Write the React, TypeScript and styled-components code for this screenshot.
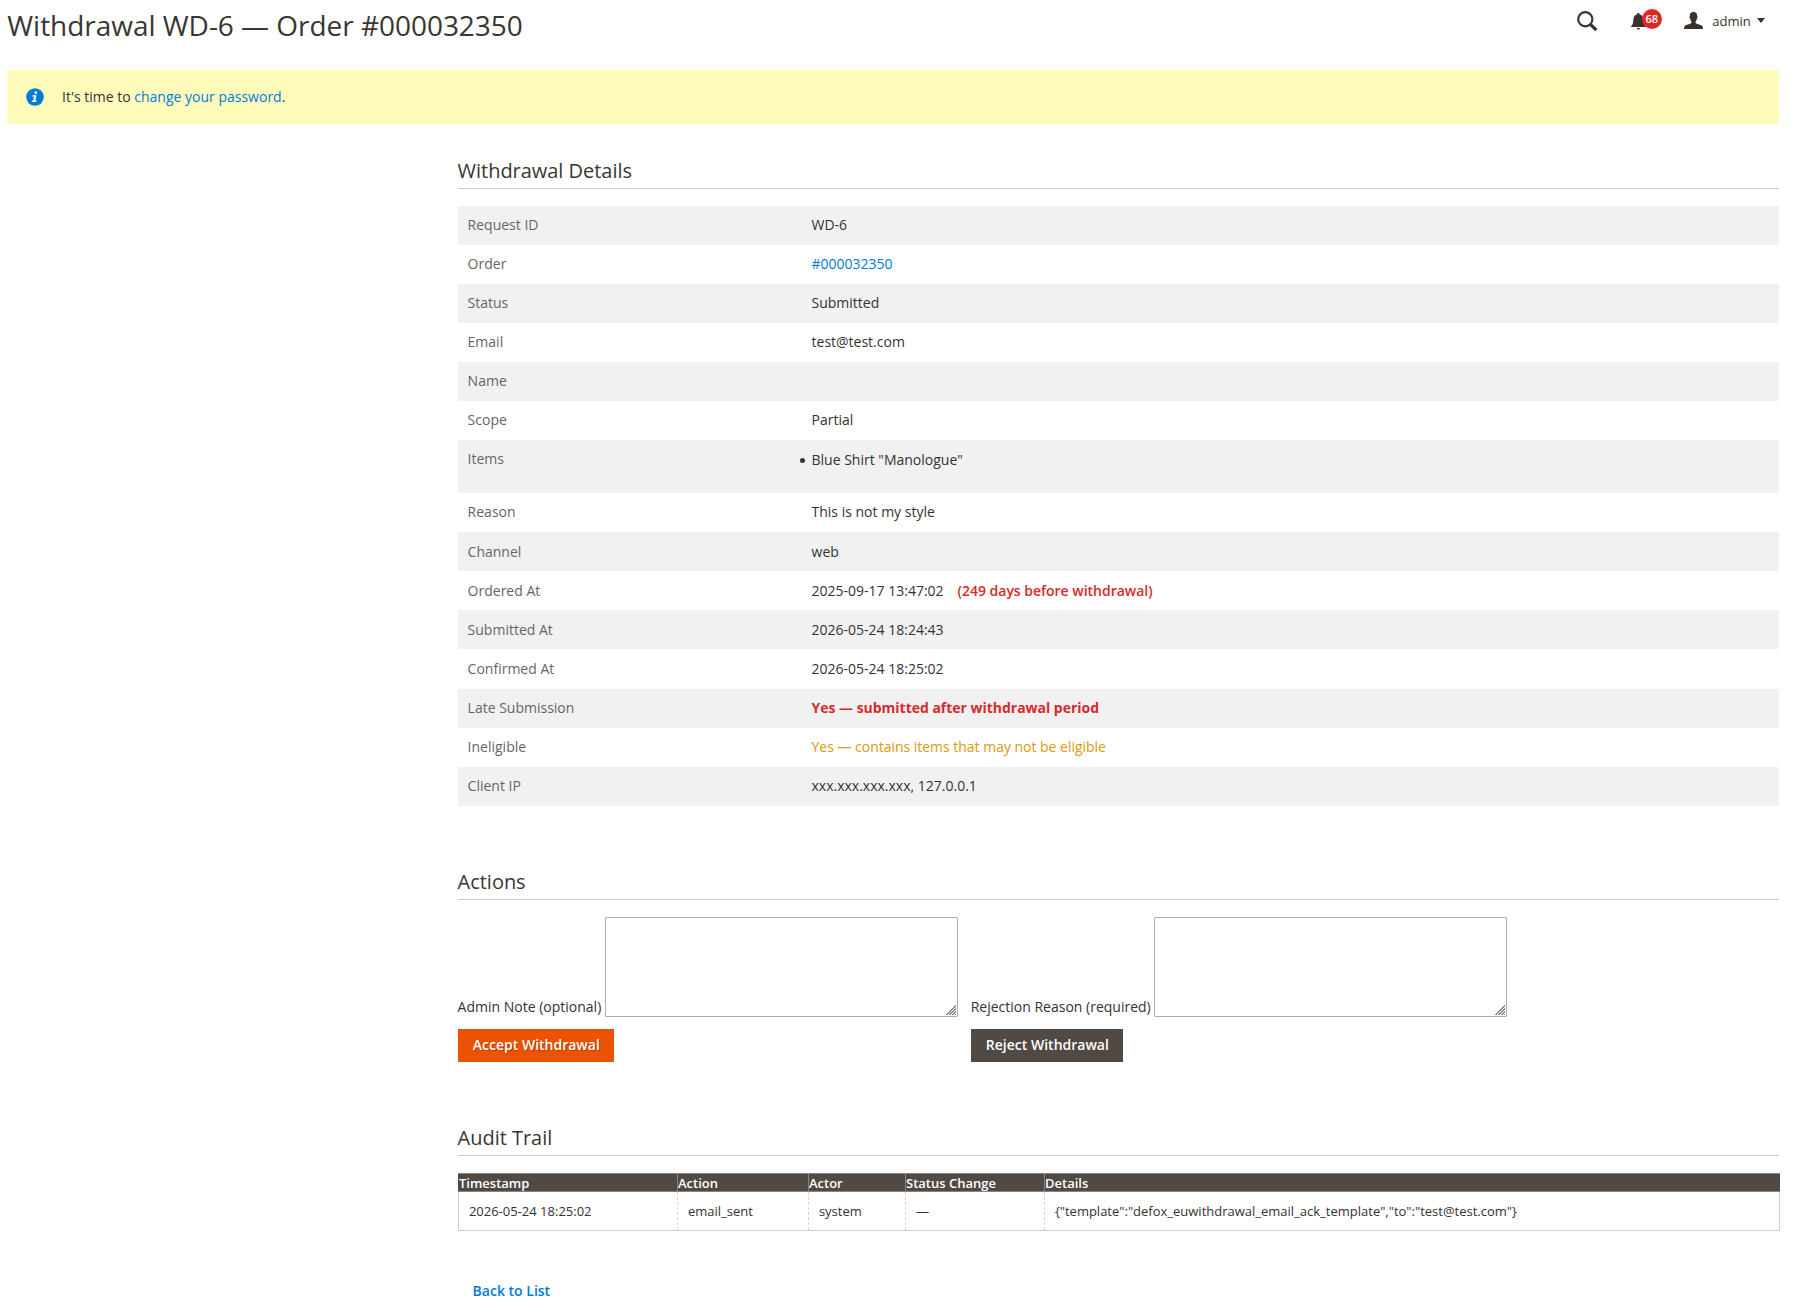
import React from 'react';
import styled, { createGlobalStyle, css } from 'styled-components';

const GlobalStyle = createGlobalStyle`
  *, *::before, *::after { box-sizing: border-box; }
  body {
    margin: 0;
    background: #fff;
    color: #333;
    font-family: "Open Sans", "Noto Sans", sans-serif;
    font-size: 14px;
    line-height: 1.36;
  }
`;

const Page = styled.div`
  width: 1779.3px;
  min-height: 1314px;
  padding-left: 7.3px;
`;

const Header = styled.header`
  display: flex;
  justify-content: space-between;
  align-items: flex-start;
  height: 70px;
`;

const Title = styled.h1`
  margin: 6px 0 0;
  font-size: 28px;
  font-weight: 400;
  line-height: 38px;
  letter-spacing: -0.03px;
  color: #3a3632;
`;

const HeaderTools = styled.div`
  display: flex;
  align-items: center;
  height: 42px;
  padding-right: 14px;
  color: #3a322c;

  svg { display: block; }
`;

const SearchButton = styled.span`
  margin-right: 33px;
`;

const Notifications = styled.span`
  position: relative;
  width: 31px;
  margin: 1px 22px 0 0;
`;

const Badge = styled.span`
  position: absolute;
  top: -4px;
  left: 10.5px;
  width: 20px;
  height: 20px;
  border-radius: 50%;
  background: #e22626;
  color: #fff;
  font-size: 11px;
  font-weight: 600;
  line-height: 20px;
  text-align: center;
`;

const Account = styled.span`
  display: flex;
  align-items: center;
  font-size: 13px;
`;

const AccountName = styled.span`
  margin: 2px 6.5px 0 9px;
`;

const Notice = styled.div`
  display: flex;
  align-items: center;
  height: 54.4px;
  padding-left: 19px;
  background: #fffbbb;
`;

const NoticeText = styled.span`
  margin: -2px 0 0 17.7px;
`;

const Link = styled.a`
  color: #007bdb;
  text-decoration: none;
`;

const Content = styled.main`
  margin-left: 450.3px;
  padding-top: 32.6px;
`;

const Section = styled.section<{ $gap: number }>`
  margin-bottom: ${(p) => p.$gap}px;
`;

const SectionTitle = styled.h2`
  margin: 0 0 17px;
  height: 32px;
  border-bottom: 1px solid #ccc;
  font-size: 20px;
  font-weight: 400;
  line-height: 27px;
  letter-spacing: -0.03px;
  color: #3a3632;
`;

const Details = styled.dl`
  margin: 0;
`;

const DetailRow = styled.div<{ $tall?: boolean }>`
  display: grid;
  grid-template-columns: 26% 1fr;
  min-height: ${(p) => (p.$tall ? 53.2 : 39.04)}px;

  &:nth-child(odd) { background: #f1f1f1; }
`;

const Term = styled.dt`
  padding: 9.12px 10px 9px;
  color: #666;
`;

const Value = styled.dd`
  margin: 0;
  padding: 9.12px 10px 9px 10.3px;
`;

const ItemList = styled.ul`
  margin: 1px 0 0;
  padding: 0;
  list-style: none;
`;

const Item = styled.li`
  display: flex;
  align-items: center;
  gap: 7px;
  margin-left: -12px;

  &::before {
    content: "";
    width: 5px;
    height: 5px;
    margin-top: 2px;
    border-radius: 50%;
    background: #333;
  }
`;

const tones = { late: '#d8292b', warn: '#e0980f' };

const Flag = styled.span<{ $tone: keyof typeof tones; $weight?: number; $spaced?: boolean }>`
  color: ${(p) => tones[p.$tone]};
  font-weight: ${(p) => p.$weight ?? 400};
  letter-spacing: -0.02px;
  ${(p) => p.$spaced && css`margin-left: 14px;`}
`;

const Forms = styled.div`
  display: flex;
  gap: 13px;
`;

const Field = styled.label`
  display: flex;
  align-items: flex-end;
  gap: 3.4px;
  height: 100px;
  margin-bottom: 12px;
`;

const FieldLabel = styled.span`
  margin-bottom: 1px;
`;

const TextArea = styled.textarea`
  width: 353px;
  height: 100px;
  margin: 0;
  border: 1px solid #adadad;
  border-radius: 1px;
  background:
    linear-gradient(135deg, #fff 50%, transparent 50%) right 1px bottom 1px / 11px 11px no-repeat,
    repeating-linear-gradient(135deg, #888 0 0.7px, #fff 1.1px 1.9px, #888 2.12px) right 1px bottom 1px / 11px 11px no-repeat,
    #fff;
  resize: none;
`;

const Button = styled.button<{ $primary?: boolean }>`
  display: block;
  height: 33px;
  padding: 0 14.6px 1px 15.2px;
  border: 0;
  background: ${(p) => (p.$primary ? '#eb5202' : '#514943')};
  color: #fff;
  font: 600 14px/32px "Open Sans", sans-serif;
  ${(p) => p.$primary && css`text-shadow: 1px 1px 0 rgba(0, 0, 0, 0.25);`}
`;

const Audit = styled.div`
  font-size: 13px;
  border: 1px solid #ccc;
  margin-right: -1px;
`;

const AuditRow = styled.div<{ $head?: boolean }>`
  display: grid;
  grid-template-columns: 219px 131px 97px 139px 1fr;
  ${(p) =>
    p.$head
      ? css`
          height: 19px;
          margin: -1px -1px 0;
          padding: 0 1px;
          border-top: 1px solid #8a837f;
          border-bottom: 1px solid #8a837f;
          background: #514943;
          color: #fff;
          font-weight: 600;
          line-height: 18px;
        `
      : css`
          height: 38px;
          line-height: 38px;
        `}
`;

const AuditCell = styled.span<{ $head?: boolean }>`
  padding-left: ${(p) => (p.$head ? 0.4 : 10.3)}px;
  &:not(:last-child) {
    border-right: 1px ${(p) => (p.$head ? 'solid #8a837f' : 'dashed #d6d6d6')};
  }
`;

const BackLink = styled(Link)`
  display: inline-block;
  margin-left: 15px;
  font-weight: 600;
`;

const details: { label: string; value: React.ReactNode; tall?: boolean }[] = [
  { label: 'Request ID', value: 'WD-6' },
  { label: 'Order', value: <Link>#000032350</Link> },
  { label: 'Status', value: 'Submitted' },
  { label: 'Email', value: 'test@test.com' },
  { label: 'Name', value: '' },
  { label: 'Scope', value: 'Partial' },
  { label: 'Items', value: <ItemList><Item>Blue Shirt "Manologue"</Item></ItemList>, tall: true },
  { label: 'Reason', value: 'This is not my style' },
  { label: 'Channel', value: 'web' },
  {
    label: 'Ordered At',
    value: (
      <>
        2025-09-17 13:47:02
        <Flag $tone="late" $weight={600} $spaced>(249 days before withdrawal)</Flag>
      </>
    ),
  },
  { label: 'Submitted At', value: '2026-05-24 18:24:43' },
  { label: 'Confirmed At', value: '2026-05-24 18:25:02' },
  { label: 'Late Submission', value: <Flag $tone="late" $weight={700}>Yes — submitted after withdrawal period</Flag> },
  { label: 'Ineligible', value: <Flag $tone="warn">Yes — contains items that may not be eligible</Flag> },
  { label: 'Client IP', value: 'xxx.xxx.xxx.xxx, 127.0.0.1' },
];

const auditHead = ['Timestamp', 'Action', 'Actor', 'Status Change', 'Details'];
const auditRow = [
  '2026-05-24 18:25:02',
  'email_sent',
  'system',
  '—',
  '{"template":"defox_euwithdrawal_email_ack_template","to":"test@test.com"}',
];

const SearchIcon = () => (
  <svg width="21" height="21" viewBox="0 0 21 21" fill="none" stroke="currentColor">
    <circle cx="8.3" cy="8.3" r="7.1" strokeWidth="2.2" />
    <path d="M13.4 13.4 19.4 19.2" strokeWidth="3.2" />
  </svg>
);

const BellIcon = () => (
  <svg width="15" height="17" viewBox="0 0 15 17" fill="currentColor">
    <path d="M6.2 0h2.2v1.2C11 1.7 12.2 3.8 12.3 6.5c.1 3.5.8 5.3 2.5 7V14H0v-.5c1.7-1.7 2.3-3.5 2.4-7C2.5 3.8 3.7 1.7 6.2 1.2zM5.8 15h3.2c-.2 1-.8 1.5-1.6 1.5S6 16 5.8 15z" />
  </svg>
);

const UserIcon = () => (
  <svg width="19" height="17" viewBox="0 0 19 17" fill="currentColor">
    <path d="M9.5 0c2.6 0 3.8 1.6 3.7 4.2.6.2.3 1.7-.3 2.2-.2 1.5-.8 2.5-1.3 3v1.5c.6 1 6 1.7 6.8 3.2.4.7.5 1.7.5 2.9H.1c0-1.2.1-2.2.5-2.9.8-1.5 6.2-2.2 6.8-3.2V9.4c-.5-.5-1.1-1.5-1.3-3-.6-.5-.9-2-.3-2.2C5.7 1.6 6.9 0 9.5 0z" />
  </svg>
);

const CaretIcon = () => (
  <svg width="8" height="5" viewBox="0 0 8 5" fill="currentColor">
    <path d="M0 0h8L4 5z" />
  </svg>
);

const InfoIcon = () => (
  <svg width="18" height="18" viewBox="0 0 18 18">
    <circle cx="9" cy="9" r="8.8" fill="#007bdb" />
    <circle cx="9.8" cy="4.7" r="1.4" fill="#fff" />
    <path d="M6.5 7.3h4.1l-1.3 5.3h1.3l-.3 1.3H5.9l.3-1.3h1l.9-4H6.2z" fill="#fff" />
  </svg>
);

export default function App() {
  return (
    <>
      <GlobalStyle />
      <Page>
        <Header>
          <Title>Withdrawal WD-6 — Order #000032350</Title>
          <HeaderTools>
            <SearchButton><SearchIcon /></SearchButton>
            <Notifications>
              <BellIcon />
              <Badge>68</Badge>
            </Notifications>
            <Account>
              <UserIcon />
              <AccountName>admin</AccountName>
              <CaretIcon />
            </Account>
          </HeaderTools>
        </Header>
        <Notice>
          <InfoIcon />
          <NoticeText>It's time to <Link>change your password</Link>.</NoticeText>
        </Notice>
        <Content>
          <Section $gap={62.3}>
            <SectionTitle>Withdrawal Details</SectionTitle>
            <Details>
              {details.map((row) => (
                <DetailRow key={row.label} $tall={row.tall}>
                  <Term>{row.label}</Term>
                  <Value>{row.value}</Value>
                </DetailRow>
              ))}
            </Details>
          </Section>
          <Section $gap={62}>
            <SectionTitle>Actions</SectionTitle>
            <Forms>
              <div>
                <Field>
                  <FieldLabel>Admin Note (optional)</FieldLabel>
                  <TextArea />
                </Field>
                <Button $primary>Accept Withdrawal</Button>
              </div>
              <div>
                <Field>
                  <FieldLabel>Rejection Reason (required)</FieldLabel>
                  <TextArea />
                </Field>
                <Button>Reject Withdrawal</Button>
              </div>
            </Forms>
          </Section>
          <Section $gap={50}>
            <SectionTitle>Audit Trail</SectionTitle>
            <Audit>
              <AuditRow $head>
                {auditHead.map((text) => <AuditCell key={text} $head>{text}</AuditCell>)}
              </AuditRow>
              <AuditRow>
                {auditRow.map((text) => <AuditCell key={text}>{text}</AuditCell>)}
              </AuditRow>
            </Audit>
          </Section>
          <BackLink>Back to List</BackLink>
        </Content>
      </Page>
    </>
  );
}
